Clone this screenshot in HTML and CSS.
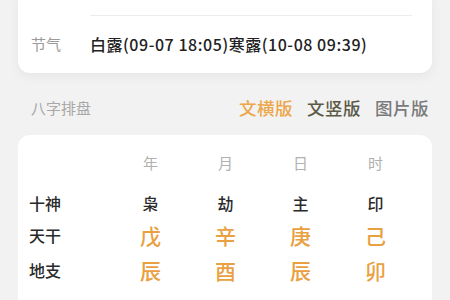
FILE: index.html
```html
<!DOCTYPE html>
<html lang="zh">
<head>
<meta charset="utf-8">
<link rel="stylesheet" href="styles.css">
</head>
<body>
<div class="page">
  <div class="card info">
    <div class="spacer"></div>
    <div class="info-row">
      <span class="info-label">节气</span>
      <span class="info-value">白露(09-07 18:05)寒露(10-08 09:39)</span>
    </div>
  </div>
  <div class="section-head">
    <span class="section-title">八字排盘</span>
    <div class="tabs">
      <span class="tab active">文横版</span>
      <span class="tab alt">文竖版</span>
      <span class="tab">图片版</span>
    </div>
  </div>
  <div class="card chart">
    <div class="grid">
      <span></span>
      <span class="head">年</span>
      <span class="head">月</span>
      <span class="head">日</span>
      <span class="head">时</span>

      <span class="label">十神</span>
      <span class="cell">枭</span>
      <span class="cell">劫</span>
      <span class="cell">主</span>
      <span class="cell">印</span>

      <span class="label">天干</span>
      <span class="cell big">戊</span>
      <span class="cell big">辛</span>
      <span class="cell big">庚</span>
      <span class="cell big">己</span>

      <span class="label">地支</span>
      <span class="cell big">辰</span>
      <span class="cell big">酉</span>
      <span class="cell big">辰</span>
      <span class="cell big">卯</span>

      <span class="label">藏干</span>
      <span class="cell">戊癸乙</span>
      <span class="cell">辛</span>
      <span class="cell">戊癸乙</span>
      <span class="cell">乙</span>
    </div>
  </div>
</div>
</body>
</html>
```
FILE: styles.css
```css
html, body {
  margin: 0;
  padding: 0;
  background: #f2f2f2;
  font-family: "Noto Sans CJK SC", "Noto Sans", sans-serif;
  overflow: hidden;
}
.page {
  width: 450px;
  height: 300px;
  overflow: hidden;
}
.card {
  background: #ffffff;
  margin: 0 18px;
  border-radius: 12px;
}
.info {
  margin-top: -12px;
  box-shadow: 0 4px 12px rgba(0, 0, 0, 0.05);
}
.spacer {
  height: 27px;
}
.info-row {
  display: flex;
  align-items: center;
  height: 58px;
  margin-left: 72px;
  margin-right: 20px;
  border-top: 1px solid #ececec;
  box-sizing: border-box;
  padding-bottom: 2px;
}
.info-label {
  margin-left: -59px;
  width: 59px;
  font-size: 15px;
  color: #9a9a9a;
}
.info-value {
  font-size: 16px;
  font-weight: 500;
  color: #222;
  letter-spacing: 0.55px;
}
.section-head {
  display: flex;
  align-items: center;
  justify-content: space-between;
  box-sizing: border-box;
  height: 62px;
  padding: 6px 21px 0 31px;
}
.section-title {
  font-size: 15px;
  color: #a8a8a8;
}
.tabs {
  display: flex;
  gap: 14px;
}
.tab {
  font-size: 17.5px;
  font-weight: 500;
  color: #7a7a7a;
  letter-spacing: 0.5px;
}
.tab.active {
  color: #eda64a;
}
.tab.alt {
  color: #5b5a47;
}
.chart {
  padding: 15px 0 0 11px;
  min-height: 200px;
}
.grid {
  display: grid;
  grid-template-columns: 84px repeat(4, 75px);
  grid-template-rows: 35px 35px 30px 39px 36px;
  align-items: center;
}
.grid > span:nth-child(-n+5) {
  height: 24px;
  margin-bottom: 8px;
}
.head {
  text-align: center;
  font-size: 15px;
  color: #b0b0b0;
}
.label {
  font-size: 16px;
  font-weight: 500;
  color: #2a2a2a;
}
.cell {
  text-align: center;
  font-size: 16px;
  font-weight: 500;
  color: #2a2a2a;
}
.cell.big {
  font-size: 21px;
  color: #e9a040;
}
```
